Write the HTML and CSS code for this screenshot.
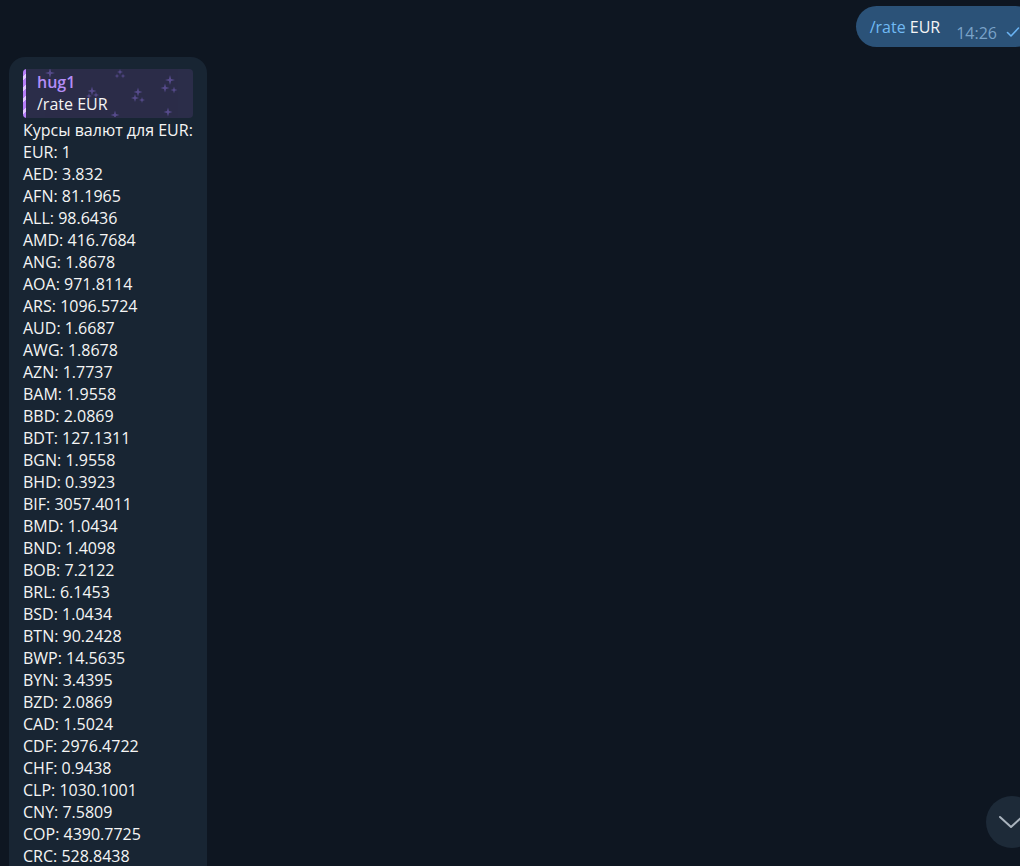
FILE: index.html
```html
<!DOCTYPE html>
<html lang="ru">
<head>
<meta charset="utf-8">
<link rel="stylesheet" href="styles.css">
</head>
<body>
<div class="chat">
  <div class="row out">
    <div class="bubble-out">
      <span class="msg"><span class="cmd">/rate</span> EUR</span>
      <span class="time">14:26</span>
      <svg class="check" width="16" height="12" viewBox="0 0 16 12"><path d="M1.5 6.5 L5 10 L12.5 2" fill="none" stroke="#6ab3f3" stroke-width="1.6" stroke-linecap="round" stroke-linejoin="round"/></svg>
    </div>
  </div>
  <div class="row in">
    <div class="bubble-in">
      <div class="quote">
        <svg class="sparkles" width="156" height="48" viewBox="0 0 156 48">
          <defs>
            <path id="sp" d="M0 -1 L0.22 -0.22 L1 0 L0.22 0.22 L0 1 L-0.22 0.22 L-1 0 L-0.22 -0.22 Z"/>
          </defs>
          <g fill="#6e5cb0" opacity="0.65">
            <use href="#sp" transform="translate(13 4) scale(5)"/>
            <use href="#sp" transform="translate(83 3) scale(3)"/>
            <use href="#sp" transform="translate(80 7) scale(2.5)"/>
            <use href="#sp" transform="translate(86 7) scale(2.5)"/>
            <use href="#sp" transform="translate(55 22) scale(4.5)"/>
            <use href="#sp" transform="translate(52 27) scale(3)"/>
            <use href="#sp" transform="translate(59 26) scale(3)"/>
            <use href="#sp" transform="translate(101 23) scale(4.5)"/>
            <use href="#sp" transform="translate(98 29) scale(4)"/>
            <use href="#sp" transform="translate(105 31) scale(3)"/>
            <use href="#sp" transform="translate(133 11) scale(5)"/>
            <use href="#sp" transform="translate(128 19) scale(4.5)"/>
            <use href="#sp" transform="translate(137 21) scale(3.5)"/>
            <use href="#sp" transform="translate(131 43) scale(4.5)"/>
            <use href="#sp" transform="translate(78 46) scale(4.5)"/>
          </g>
        </svg>
        <div class="q-name">hug1</div>
        <div class="q-text">/rate EUR</div>
      </div>
      <div class="body">
        <div>Курсы валют для EUR:</div>
        <div>EUR: 1</div>
        <div>AED: 3.832</div>
        <div>AFN: 81.1965</div>
        <div>ALL: 98.6436</div>
        <div>AMD: 416.7684</div>
        <div>ANG: 1.8678</div>
        <div>AOA: 971.8114</div>
        <div>ARS: 1096.5724</div>
        <div>AUD: 1.6687</div>
        <div>AWG: 1.8678</div>
        <div>AZN: 1.7737</div>
        <div>BAM: 1.9558</div>
        <div>BBD: 2.0869</div>
        <div>BDT: 127.1311</div>
        <div>BGN: 1.9558</div>
        <div>BHD: 0.3923</div>
        <div>BIF: 3057.4011</div>
        <div>BMD: 1.0434</div>
        <div>BND: 1.4098</div>
        <div>BOB: 7.2122</div>
        <div>BRL: 6.1453</div>
        <div>BSD: 1.0434</div>
        <div>BTN: 90.2428</div>
        <div>BWP: 14.5635</div>
        <div>BYN: 3.4395</div>
        <div>BZD: 2.0869</div>
        <div>CAD: 1.5024</div>
        <div>CDF: 2976.4722</div>
        <div>CHF: 0.9438</div>
        <div>CLP: 1030.1001</div>
        <div>CNY: 7.5809</div>
        <div>COP: 4390.7725</div>
        <div>CRC: 528.8438</div>
      </div>
    </div>
  </div>
</div>
<button class="scroll-down" aria-label="Вниз">
  <svg width="26" height="16" viewBox="0 0 26 16"><path d="M2 3 L13 13 L24 3" fill="none" stroke="#aab4be" stroke-width="2" stroke-linecap="round" stroke-linejoin="round"/></svg>
</button>
</body>
</html>
```

FILE: styles.css
```css
html, body {
  margin: 0;
  padding: 0;
  width: 1020px;
  height: 866px;
  overflow: hidden;
  background: #0e1621;
  font-family: "Open Sans", "Noto Sans", sans-serif;
  font-size: 16px;
  color: #f5f5f5;
}

.chat {
  display: flex;
  flex-direction: column;
  gap: 10px;
  padding-top: 6px;
}

.row {
  display: flex;
}

.row.out {
  justify-content: flex-end;
}

.bubble-out {
  display: flex;
  align-items: center;
  height: 41px;
  box-sizing: border-box;
  padding: 0 14px;
  margin-right: -16px;
  background: #2b5278;
  border-radius: 21px;
  line-height: 22px;
}

.cmd {
  color: #71baf4;
}

.time {
  margin-left: 16px;
  margin-top: 12px;
  font-size: 16px;
  color: #7aa3c9;
}

.check {
  margin-left: 9px;
  margin-top: 10px;
}

.row.in {
  padding-left: 9px;
}

.bubble-in {
  background: #182533;
  border-radius: 16px;
  padding: 12px 14px 30px;
  width: 170px;
}

.quote {
  position: relative;
  overflow: hidden;
  background: #2b2d49;
  border-radius: 4px;
  padding: 2px 8px 3px 14px;
  line-height: 22px;
}

.quote::before {
  content: "";
  position: absolute;
  left: 0;
  top: 0;
  bottom: 0;
  width: 3px;
  background: repeating-linear-gradient(135deg, #b67ef8 0 5px, #e2c8ff 5px 8px);
}

.sparkles {
  position: absolute;
  left: 14px;
  top: 0;
}

.q-name {
  position: relative;
  color: #b48cf6;
  font-weight: 600;
}

.q-text {
  position: relative;
  color: #f5f5f5;
}

.body {
  margin-top: 1px;
  line-height: 22px;
}

.scroll-down {
  position: absolute;
  left: 986px;
  top: 796px;
  width: 52px;
  height: 52px;
  border: none;
  border-radius: 50%;
  background: #1d2a38;
  padding: 0;
  display: flex;
  align-items: center;
  justify-content: flex-start;
  padding-left: 12px;
}
```
